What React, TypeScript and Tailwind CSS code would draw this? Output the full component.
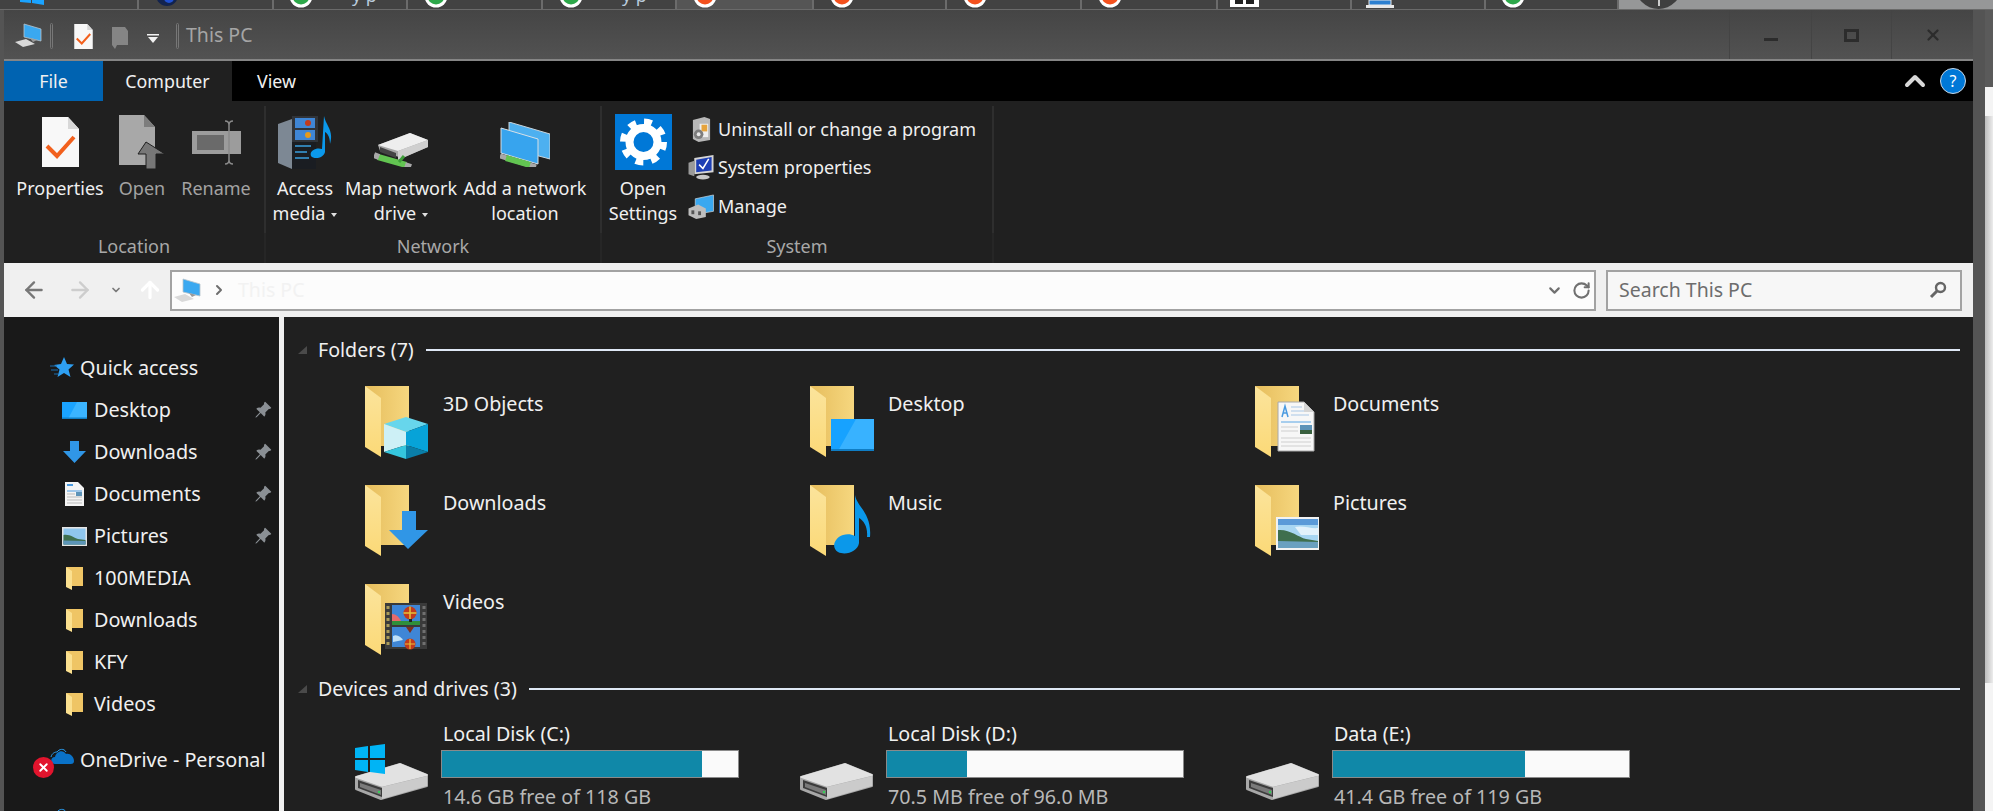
import { ArrowLeft, ArrowRight, ArrowUp, ChevronDown, ChevronRight, ChevronUp, RotateCw, X } from "lucide-react";
import { BsPinAngleFill } from "react-icons/bs";
import type { ReactNode } from "react";

const FONT = "font-['Noto_Sans','Open_Sans',sans-serif]";

function FolderBase({ children }: { children?: ReactNode }) {
  return (
    <svg width="64" height="74" viewBox="0 0 64 74" className="shrink-0">
      <defs>
        <linearGradient id="folderBack" x1="0" y1="0" x2="1" y2="0">
          <stop offset="0" stopColor="#e6bd5c" />
          <stop offset="1" stopColor="#f6d77f" />
        </linearGradient>
        <linearGradient id="folderFlap" x1="0" y1="0" x2="0" y2="1">
          <stop offset="0" stopColor="#fbe49c" />
          <stop offset="1" stopColor="#fbd977" />
        </linearGradient>
      </defs>
      <polygon points="0,0 44,0 44,60 16,60" fill="url(#folderBack)" />
      <polygon points="0,0 16,12 16,71 0,61" fill="url(#folderFlap)" />
      {children}
    </svg>
  );
}

function CubeOverlay() {
  return (
    <g>
      <polygon points="41,31 63,38 41,46 19,38" fill="#67d6ec" />
      <polygon points="19,38 41,46 41,59 19,66" fill="#cdf0f6" />
      <polygon points="63,38 41,46 41,59 63,66" fill="#07a3d8" />
      <polygon points="19,66 41,59 41,73" fill="#35c6de" />
      <polygon points="63,66 41,59 41,73" fill="#0a7ea8" />
    </g>
  );
}

function DownloadOverlay() {
  return <polygon points="37,26 51,26 51,45 63,45 43,64 24,45 37,45" fill="#3096e6" />;
}

function DesktopOverlay() {
  return (
    <g>
      <rect x="21" y="33" width="44" height="32" fill="#17a2ff" />
      <polygon points="46,33 65,33 65,65 28,65" fill="#38b2ff" />
      <rect x="21" y="63" width="44" height="2" fill="#0f7dc4" />
    </g>
  );
}

function DocLines() {
  return (
    <g>
      <polygon points="23,16 49,16 59,26 59,65 23,65" fill="#f7f7f7" stroke="#a8a8a8" />
      <polygon points="49,16 59,26 49,26" fill="#d5d5d5" />
      <path d="M27 31 L30 20 L33 31 M28 27h4" stroke="#4a9ae0" strokeWidth="1.5" fill="none" />
      <path d="M36 21h11M36 25h13M36 29h18" stroke="#a9c7e6" />
      <path d="M26 36h30" stroke="#59a5e4" />
      <path d="M26 41h17M26 45h17M26 52h30M26 56h30M26 60h30" stroke="#cfcfcf" />
      <rect x="45" y="39" width="12" height="9" fill="#5d93b8" />
      <rect x="45" y="44" width="12" height="4" fill="#39603f" />
    </g>
  );
}

function MusicOverlay() {
  return (
    <path
      d="M45 10 C47 22 62 28 60 52 L57 52 C58 42 54 36 49 33 L49 58 C48 66 36 71 28 67 C21 63 24 53 33 50 C37 49 41 49 45 51 Z"
      fill="#0b98ea"
    />
  );
}

function PictureOverlay() {
  return (
    <g>
      <rect x="21" y="32" width="44" height="33" fill="#f2f2f2" />
      <rect x="23" y="34" width="40" height="29" fill="#a8d6f2" />
      <rect x="23" y="34" width="40" height="6" fill="#5b9ad8" />
      <path d="M40 42 C48 40 56 44 63 43 L63 50 L46 50 Z" fill="#e3f2fb" />
      <path d="M23 45 C35 44 43 52 51 54 L63 56 L63 63 L23 63 Z" fill="#3f6f4e" />
      <path d="M23 56 L63 57 L63 63 L23 63 Z" fill="#6aa0c0" />
    </g>
  );
}

function FilmOverlay() {
  return (
    <g>
      <rect x="20" y="19" width="42" height="46" fill="#3a3a3a" />
      <path d="M23 22v40" stroke="#a89a5a" strokeWidth="3" strokeDasharray="3 3" />
      <path d="M59 22v40" stroke="#707070" strokeWidth="3" strokeDasharray="3 3" />
      <rect x="27" y="21" width="28" height="20" fill="#3f86d6" />
      <rect x="27" y="43" width="28" height="20" fill="#3f86d6" />
      <rect x="27" y="37" width="28" height="4" fill="#2f8f3a" />
      <path d="M27 30 C31 30 34 33 36 37 L27 37 Z" fill="#e86a6a" />
      <circle cx="45" cy="29" r="6.5" fill="#c23a1c" />
      <path d="M45 22.5v13M38.5 29h13" stroke="#e5c23a" strokeWidth="1.5" />
      <rect x="44" y="35" width="3" height="3" fill="#222" />
      <path d="M41 43h8l-4 6z" fill="#7d2f1c" />
      <circle cx="45" cy="60" r="5.5" fill="#c23a1c" />
      <path d="M45 55v10M40 60h10" stroke="#e5c23a" strokeWidth="1.2" />
      <path d="M28 52 C32 50 36 53 38 56 L28 58 Z" fill="#bfe0f8" />
    </g>
  );
}

const folders: { name: string; overlay: ReactNode }[] = [
  { name: "3D Objects", overlay: <CubeOverlay /> },
  { name: "Desktop", overlay: <DesktopOverlay /> },
  { name: "Documents", overlay: <DocLines /> },
  { name: "Downloads", overlay: <DownloadOverlay /> },
  { name: "Music", overlay: <MusicOverlay /> },
  { name: "Pictures", overlay: <PictureOverlay /> },
  { name: "Videos", overlay: <FilmOverlay /> },
];

function DriveIcon({ windows }: { windows?: boolean }) {
  return (
    <svg width="74" height="57" viewBox="0 0 74 57" className="shrink-0">
      <polygon points="1,33 45,20 72,31 72,42 26,55 1,45" fill="#a8a8a8" stroke="#a8a8a8" strokeWidth="2" strokeLinejoin="round" />
      <polygon points="1,33 45,20 72,31 27,42" fill="#e2e2e2" stroke="#e2e2e2" strokeWidth="1.5" strokeLinejoin="round" />
      <polygon points="27,43 72,32 72,42 27,55" fill="#cbcbcb" />
      <polygon points="3,36 27,44 27,53 3,44" fill="#3c3c3c" />
      <polygon points="5,39 26,46 26,51 5,43" fill="#7a7a7a" />
      <circle cx="24" cy="48" r="1.2" fill="#35d058" />
      {windows && (
        <g fill="#00b4f5">
          <polygon points="0,4 13,2 13,14 0,14" />
          <polygon points="15,2 30,0 30,14 15,14" />
          <polygon points="0,16 13,16 13,28 0,26" />
          <polygon points="15,16 30,16 30,30 15,28" />
        </g>
      )}
    </svg>
  );
}

const drives = [
  { name: "Local Disk (C:)", free: "14.6 GB free of 118 GB", used: 88, windows: true },
  { name: "Local Disk (D:)", free: "70.5 MB free of 96.0 MB", used: 27, windows: false },
  { name: "Data (E:)", free: "41.4 GB free of 119 GB", used: 65, windows: false },
];

function PcIcon({ className }: { className?: string }) {
  return (
    <svg viewBox="0 0 27 24" className={className}>
      <polygon points="9,1 26,6 26,18 9,14" fill="#3aa8f0" stroke="#b8c4cc" strokeWidth="0.8" />
      <polygon points="15,15 22,17 18,19" fill="#9a9a9a" />
      <polygon points="0,19 11,16 20,21 8,24" fill="#d9d9d9" />
    </svg>
  );
}

function PropertiesIcon({ className }: { className?: string }) {
  return (
    <svg viewBox="0 0 37 50" className={className}>
      <polygon points="0,0 26,0 37,12 37,50 0,50" fill="#f8f8f8" />
      <polygon points="26,0 37,12 26,12" fill="#d8d8d8" />
      <path d="M5 29 L15 39 L32 20" stroke="#f2601d" strokeWidth="4" fill="none" />
    </svg>
  );
}

function OpenIcon({ className }: { className?: string }) {
  return (
    <svg viewBox="0 0 46 54" className={className}>
      <polygon points="0,0 25,0 36,12 36,50 0,50" fill="#a8a8a8" />
      <polygon points="25,0 36,12 25,12" fill="#7d7d7d" />
      <polygon points="27,27 46,39 37,39 37,54 27,54 27,39 19,39" fill="#777777" stroke="#1f1f1f" />
    </svg>
  );
}

function RenameIcon({ className }: { className?: string }) {
  return (
    <svg viewBox="0 0 49 45" className={className}>
      <rect x="0" y="11" width="49" height="23" fill="#9c9c9c" />
      <rect x="5" y="15" width="27" height="15" fill="#6a6a6a" />
      <path d="M33 1 C36 1 37 3 37 5 L37 40 C37 42 38 44 41 44 M41 1 C38 1 37 3 37 5 M37 40 C37 42 36 44 33 44" stroke="#8a8a8a" strokeWidth="1.5" fill="none" />
    </svg>
  );
}

function MediaIcon({ className }: { className?: string }) {
  return (
    <svg viewBox="0 0 55 53" className={className}>
      <polygon points="0,8 14,3 38,6 38,53 14,53 0,47" fill="#7d8894" />
      <polygon points="14,9 38,10 38,53 14,53" fill="#1a1d22" />
      <path d="M17 30h16M17 36h12M17 42h14" stroke="#3aa0e0" strokeWidth="1.5" />
      <rect x="14" y="0" width="26" height="26" fill="#30343a" />
      <rect x="17" y="2" width="20" height="10" fill="#3f86d6" />
      <rect x="17" y="14" width="20" height="10" fill="#3f86d6" />
      <circle cx="30" cy="7" r="3" fill="#c23a1c" />
      <circle cx="30" cy="19" r="3" fill="#e59a1c" />
      <path d="M46 0 C48 10 56 14 52 28 C52 20 49 17 47 16 L47 36 C46 42 36 44 33 40 C31 35 38 31 44 33 Z" fill="#0b98ea" />
    </svg>
  );
}

function MapDriveIcon({ className }: { className?: string }) {
  return (
    <svg viewBox="0 0 54 34" className={className}>
      <polygon points="4,12 36,0 54,7 54,14 28,25 6,18" fill="#a8a8a8" />
      <polygon points="4,12 36,0 54,7 24,18" fill="#eeeeee" />
      <polygon points="24,18 54,7 54,14 24,27" fill="#cfcfcf" />
      <polygon points="6,14 22,20 22,25 6,19" fill="#444" />
      <path d="M4 24 L32 32" stroke="#62c451" strokeWidth="6" />
      <path d="M0 22 L5 24M31 32 L37 34" stroke="#a8a8a8" strokeWidth="6" />
      <path d="M30 23 L25 29" stroke="#3f9e3a" strokeWidth="3" />
    </svg>
  );
}

function NetLocationIcon({ className }: { className?: string }) {
  return (
    <svg viewBox="0 0 50 45" className={className}>
      <polygon points="9,0 50,12 50,37 9,26" fill="#4db0f0" stroke="#c8d4dc" />
      <polygon points="1,6 38,17 38,42 1,31" fill="#37a4ee" stroke="#d8e0e6" />
      <path d="M0 34 L36 45" stroke="#a8a8a8" strokeWidth="5" />
      <path d="M6 36 L30 43" stroke="#62c451" strokeWidth="6" />
    </svg>
  );
}

function GearIcon() {
  return (
    <svg viewBox="0 0 57 56" className="w-[57px] h-[56px] bg-[#0078d7]">
      <circle cx="28.5" cy="28" r="14" stroke="#ffffff" strokeWidth="8" fill="none" />
      <circle cx="28.5" cy="28" r="20" stroke="#ffffff" strokeWidth="7" fill="none" strokeDasharray="7.7 8" />
    </svg>
  );
}

function UninstallIcon() {
  return (
    <svg viewBox="0 0 22 26" className="w-[21px] h-[25px]">
      <polygon points="2,3 14,0 20,2 20,24 8,26 2,23" fill="#b8b8b8" />
      <rect x="9" y="7" width="9" height="14" fill="#efefef" />
      <rect x="11" y="8" width="6" height="7" fill="#e6a33c" />
      <circle cx="8" cy="18" r="5" fill="#7d7d7d" />
      <circle cx="8" cy="18" r="2" fill="#e8e8e8" />
    </svg>
  );
}

function SystemIcon() {
  return (
    <svg viewBox="0 0 27 26" className="w-[27px] h-[25px]">
      <polygon points="6,3 26,0 26,18 6,20" fill="#d5d5d5" />
      <polygon points="8,5 24,2 24,16 8,18" fill="#1d3fb5" />
      <path d="M11 10 L15 14 L21 4" stroke="#ffffff" strokeWidth="1.6" fill="none" />
      <polygon points="0,8 6,6 6,22 0,20" fill="#9a9a9a" />
      <ellipse cx="15" cy="23" rx="7" ry="2.5" fill="#c8c8c8" />
    </svg>
  );
}

function ManageIcon() {
  return (
    <svg viewBox="0 0 27 26" className="w-[27px] h-[25px]">
      <polygon points="7,5 26,1 26,18 14,20 7,12" fill="#3aa8f0" stroke="#cfd8de" strokeWidth="0.7" />
      <polygon points="0,15 10,11 18,15 18,24 8,26 0,22" fill="#bdbdbd" />
      <rect x="3" y="17" width="3" height="4" fill="#555" />
      <rect x="10" y="18" width="3" height="4" fill="#555" />
    </svg>
  );
}

function StarIcon() {
  return (
    <svg viewBox="0 0 24 22" className="w-[24px] h-[22px] shrink-0">
      <polygon points="14,0 17,7 24,7.5 18.5,12.5 20.5,20 14,16 7.5,20 9.5,12.5 4,8 11,7" fill="#2e9ff2" />
      <path d="M0 9h7M1 13h7M4 17h4" stroke="#1a6fb0" strokeWidth="1" />
    </svg>
  );
}

function NavDesktop() {
  return (
    <svg viewBox="0 0 25 17" className="w-[25px] h-[17px]">
      <rect width="25" height="17" fill="#1aa3ff" />
      <polygon points="15,0 25,0 25,17 6,17" fill="#3bb4ff" />
      <rect y="15.5" width="25" height="1.5" fill="#0f7dc4" />
    </svg>
  );
}

function NavDownload() {
  return (
    <svg viewBox="0 0 23 23" className="w-[23px] h-[23px]">
      <polygon points="7,0 16,0 16,10 23,10 11.5,22 0,10 7,10" fill="#3096e6" />
    </svg>
  );
}

function NavDocument() {
  return (
    <svg viewBox="0 0 19 24" className="w-[19px] h-[24px]">
      <polygon points="0,0 13,0 19,6 19,24 0,24" fill="#f4f4f4" />
      <path d="M2 9h15" stroke="#4a9ae0" />
      <path d="M2 3h6" stroke="#4a9ae0" strokeWidth="2" />
      <path d="M2 12h8M2 15h15M2 18h15M2 21h15" stroke="#bbbbbb" />
      <rect x="11" y="10" width="6" height="4" fill="#5d93b8" />
    </svg>
  );
}

function NavPicture() {
  return (
    <svg viewBox="0 0 25 19" className="w-[25px] h-[19px]">
      <rect width="25" height="19" fill="#e4e4e4" />
      <rect x="1.5" y="1.5" width="22" height="16" fill="#8fc6ee" />
      <path d="M1.5 8 C8 7 12 11 16 12 L23.5 13 L23.5 17.5 L1.5 17.5 Z" fill="#3f6f4e" />
      <path d="M1.5 13.5 L23.5 14 L23.5 17.5 L1.5 17.5 Z" fill="#5c95b8" />
    </svg>
  );
}

function NavFolder() {
  return (
    <svg viewBox="0 0 17 23" className="w-[17px] h-[23px]">
      <polygon points="0,0 17,0 17,19 6,19" fill="#efc565" />
      <polygon points="0,0 6,4 6,23 0,20" fill="#fbe08f" />
    </svg>
  );
}

function OneDriveIcon({ className }: { className?: string }) {
  return (
    <svg viewBox="0 0 24 17" className={className}>
      <path d="M5 16 C0 16 0 9 5 9 C6 3 13 1 16 6 C20 5 24 9 24 13 C24 15 23 16 21 16 Z" fill="#0a72c8" />
      <path d="M1 9 C2 5 5 4 7 4 C9 1 14 0 16 4" stroke="#2a9df0" strokeWidth="1" fill="none" />
    </svg>
  );
}

const quickAccess: { name: string; icon: ReactNode; pinned?: boolean }[] = [
  { name: "Desktop", icon: <NavDesktop />, pinned: true },
  { name: "Downloads", icon: <NavDownload />, pinned: true },
  { name: "Documents", icon: <NavDocument />, pinned: true },
  { name: "Pictures", icon: <NavPicture />, pinned: true },
  { name: "100MEDIA", icon: <NavFolder /> },
  { name: "Downloads", icon: <NavFolder /> },
  { name: "KFY", icon: <NavFolder /> },
  { name: "Videos", icon: <NavFolder /> },
];

function Ring({ color, className }: { color: string; className: string }) {
  return (
    <svg width="26" height="8" viewBox="0 0 26 8" className={className}>
      <circle cx="13" cy="-4" r="11.5" fill="#ffffff" />
      <circle cx="13" cy="-4" r="8.5" fill={color} />
    </svg>
  );
}

const GREEN = "#2da84a";
const ORANGE = "#f4511e";

const browserTabs: { w: string; active?: boolean; content?: ReactNode }[] = [
  {
    w: "w-[139px]",
    content: (
      <svg width="24" height="5" viewBox="0 0 24 5" className="ml-[20px]">
        <polygon points="0,0 11,0 11,3 0,2" fill="#1aa3ff" />
        <polygon points="12,0 24,0 24,5 12,3" fill="#1aa3ff" />
      </svg>
    ),
  },
  {
    w: "w-[135px]",
    content: (
      <svg width="24" height="6" viewBox="0 0 24 6" className="ml-[16px]">
        <circle cx="12" cy="-5" r="11" fill="#12234f" />
        <circle cx="14" cy="-2" r="5" fill="#1f4fd0" />
      </svg>
    ),
  },
  {
    w: "w-[134px]",
    content: (
      <>
        <Ring color={GREEN} className="ml-[14px]" />
        <span className="ml-[38px] -mt-[17px] text-[18px] leading-[24px] text-[#b9cbdc]">y p</span>
      </>
    ),
  },
  { w: "w-[135px]", content: <Ring color={GREEN} className="ml-[15px]" /> },
  {
    w: "w-[134px]",
    content: (
      <>
        <Ring color={GREEN} className="ml-[15px]" />
        <span className="ml-[38px] -mt-[17px] text-[18px] leading-[24px] text-[#b9cbdc]">y p</span>
      </>
    ),
  },
  { w: "w-[137px]", active: true, content: <Ring color={ORANGE} className="ml-[15px]" /> },
  { w: "w-[133px]", content: <Ring color={ORANGE} className="ml-[15px]" /> },
  { w: "w-[135px]", content: <Ring color={ORANGE} className="ml-[15px]" /> },
  { w: "w-[136px]", content: <Ring color={ORANGE} className="ml-[15px]" /> },
  {
    w: "w-[134px]",
    content: (
      <div className="ml-[12px] w-[29px] h-[7px] bg-white flex items-start justify-center gap-[3px]">
        <div className="w-[8px] h-[4px] bg-[#222]" />
        <div className="w-[8px] h-[4px] bg-[#222]" />
      </div>
    ),
  },
  {
    w: "w-[134px]",
    content: (
      <svg width="28" height="8" viewBox="0 0 28 8" className="ml-[14px]">
        <rect x="3" width="22" height="5" fill="#2b7fd0" stroke="#e8e8e8" />
        <rect y="5" width="28" height="3" fill="#e8e8e8" />
      </svg>
    ),
  },
  { w: "w-[133px]", content: <Ring color={GREEN} className="ml-[14px]" /> },
];

function TabStrip() {
  return (
    <div className="h-[9px] flex bg-[#969798] overflow-hidden">
      <div className="w-[3px] bg-[#424242] border-r border-[#6a6a6a]" />
      {browserTabs.map((tab, i) => (
        <div
          key={i}
          className={`${tab.w} ${i === 0 ? "-ml-[3px]" : ""} h-[9px] flex items-start overflow-hidden border-r-2 border-[#6b6b6b] ${tab.active ? "bg-[#555555]" : "bg-[#424242]"}`}
        >
          {tab.content}
        </div>
      ))}
      <div className="ml-[16px] w-[47px] h-[9px] overflow-hidden flex justify-center">
        <div className="w-[47px] h-[47px] shrink-0 -mt-[38px] rounded-full bg-[#3f3f3f] flex justify-center items-end">
          <div className="w-[2px] h-[6px] bg-[#cccccc] mb-[3px]" />
        </div>
      </div>
    </div>
  );
}

function TitleBar() {
  return (
    <div className="h-[51px] flex bg-gradient-to-b from-[#454545] to-[#525252] border-b-2 border-[#858585]">
      <PcIcon className="ml-[11px] mt-[13px] w-[27px] h-[24px] shrink-0" />
      <div className="ml-[8px] mt-[13px] w-[3px] h-[26px] border border-[#777] rounded-sm" />
      <PropertiesIcon className="ml-[21px] mt-[14px] w-[19px] h-[25px] shrink-0" />
      <svg viewBox="0 0 16 22" className="ml-[19px] mt-[17px] w-[16px] h-[22px] shrink-0">
        <polygon points="0,0 13,0 16,4 16,18 5,18 3,22 0,18" fill="#858585" />
      </svg>
      <svg viewBox="0 0 12 9" className="ml-[19px] mt-[24px] w-[12px] h-[9px] shrink-0">
        <rect width="12" height="1.5" fill="#f2f2f2" />
        <polygon points="1,3 11,3 6,9" fill="#f2f2f2" />
      </svg>
      <div className="ml-[17px] mt-[13px] w-[3px] h-[26px] border border-[#777] rounded-sm" />
      <span className="ml-[7px] mt-[11px] text-[19.5px] leading-[28px] text-[#a5a5a5]">This PC</span>
      <div className="ml-auto flex">
        <div className="w-[82px] border-l border-[#444] flex justify-center">
          <div className="mt-[28px] w-[14px] h-[3px] bg-[#2c2c2c]" />
        </div>
        <div className="w-[80px] border-l border-[#444] flex justify-center">
          <div className="mt-[19px] w-[15px] h-[13px] border-[3px] border-[#2c2c2c]" />
        </div>
        <div className="w-[82px] border-l border-[#444] flex justify-center">
          <X size={18} strokeWidth={3} color="#2c2c2c" className="mt-[16px]" />
        </div>
      </div>
    </div>
  );
}

function RibbonTabs() {
  return (
    <div className="h-[40px] flex items-center bg-black text-[#f0f0f0] text-[17.8px]">
      <div className="w-[99px] h-full bg-[#0063b1] flex items-center justify-center">File</div>
      <div className="w-[129px] h-full bg-[#202020] flex items-center justify-center">Computer</div>
      <span className="ml-[25px]">View</span>
      <ChevronUp size={32} strokeWidth={3} color="#d8d8d8" className="ml-auto" />
      <div className="ml-[9px] mr-[7px] w-[26px] h-[26px] rounded-full bg-[#0078d7] border border-[#c8d8e8] flex items-center justify-center text-white text-[16px]">?</div>
    </div>
  );
}

function LargeButton({ width, icon, lines, dim }: { width: string; icon: ReactNode; lines: ReactNode[]; dim?: boolean }) {
  return (
    <div className={`${width} flex flex-col items-center shrink-0`}>
      <div className="h-[75px] pt-[7px] flex items-center justify-center">{icon}</div>
      {lines.map((line, i) => (
        <div key={i} className={`h-[25px] leading-[25px] whitespace-nowrap ${dim ? "text-[#a3a3a3]" : "text-[#f0f0f0]"}`}>
          {line}
        </div>
      ))}
    </div>
  );
}

function Caret() {
  return <span className="inline-block ml-[6px] mb-[3px] border-x-[3px] border-x-transparent border-t-[4px] border-t-[#e0e0e0]" />;
}

function RibbonGroup({ width, label, children }: { width: string; label: string; children: ReactNode }) {
  return (
    <div className={`${width} flex flex-col shrink-0`}>
      <div className="h-[131px] pr-0 flex border-r-2 border-[#2e2e2e] mt-[5px] -mb-[5px]">
        <div className="-mt-[5px] flex">{children}</div>
      </div>
      <div className="mt-[5px] h-[31px] pb-[2px] flex items-center justify-center text-[18px] text-[#a8a8a8] border-r-2 border-[#262626]">{label}</div>
    </div>
  );
}

function Ribbon() {
  return (
    <div className="h-[162px] flex bg-[#202020] text-[18px] overflow-hidden">
      <RibbonGroup width="w-[262px]" label="Location">
        <LargeButton width="w-[112px]" icon={<PropertiesIcon className="w-[37px] h-[50px]" />} lines={["Properties"]} />
        <LargeButton width="w-[52px]" icon={<OpenIcon className="w-[46px] h-[54px]" />} lines={["Open"]} dim />
        <LargeButton width="w-[96px]" icon={<RenameIcon className="w-[49px] h-[45px]" />} lines={["Rename"]} dim />
      </RibbonGroup>
      <RibbonGroup width="w-[336px]" label="Network">
        <LargeButton width="w-[78px]" icon={<MediaIcon className="w-[55px] h-[53px]" />} lines={["Access", <>media<Caret /></>]} />
        <LargeButton width="w-[114px]" icon={<MapDriveIcon className="w-[54px] h-[34px] mt-[16px]" />} lines={["Map network", <>drive<Caret /></>]} />
        <LargeButton width="w-[134px]" icon={<NetLocationIcon className="w-[50px] h-[45px] mt-[5px]" />} lines={["Add a network", "location"]} />
      </RibbonGroup>
      <RibbonGroup width="w-[392px]" label="System">
        <LargeButton width="w-[82px]" icon={<GearIcon />} lines={["Open", "Settings"]} />
        <div className="pt-[9px] flex flex-col text-[#f0f0f0]">
          {[
            { label: "Uninstall or change a program", icon: <UninstallIcon /> },
            { label: "System properties", icon: <SystemIcon /> },
            { label: "Manage", icon: <ManageIcon /> },
          ].map((item) => (
            <div key={item.label} className="h-[38.5px] flex items-center whitespace-nowrap">
              <div className="w-[34px] flex justify-center">{item.icon}</div>
              <span>{item.label}</span>
            </div>
          ))}
        </div>
      </RibbonGroup>
    </div>
  );
}

function NavBar() {
  return (
    <div className="h-[54px] flex items-center bg-[#f0f0f0]">
      <ArrowLeft size={26} strokeWidth={2.2} color="#777777" className="ml-[17px] shrink-0" />
      <ArrowRight size={26} strokeWidth={2.2} color="#cdcdcd" className="ml-[20px] shrink-0" />
      <ChevronDown size={12} strokeWidth={3.5} color="#7a7a7a" className="ml-[17px] shrink-0" />
      <ArrowUp size={26} strokeWidth={3} color="#ffffff" className="ml-[15px] shrink-0" />
      <div className="ml-[7px] w-[1426px] h-[41px] flex items-center bg-[#fcfcfc] border-2 border-[#a2a2a2]">
        <PcIcon className="ml-[2px] w-[27px] h-[24px] shrink-0" />
        <ChevronRight size={16} strokeWidth={3} color="#6e6e6e" className="ml-[10px] shrink-0" />
        <span className="ml-[11px] text-[19.5px] text-[#f2f2f2]">This PC</span>
        <ChevronDown size={17} strokeWidth={3} color="#707070" className="ml-auto" />
        <RotateCw size={19} strokeWidth={2.6} color="#707070" className="ml-[9px] mr-[3px]" />
      </div>
      <div className="ml-[10px] w-[356px] h-[41px] flex items-center bg-[#f7f7f7] border-2 border-[#a2a2a2] text-[#6d6d6d]">
        <span className="ml-[11px] text-[19.5px]">Search This PC</span>
        <svg viewBox="0 0 18 18" className="ml-auto mr-[13px] w-[18px] h-[18px]">
          <circle cx="11.5" cy="6.5" r="4.5" stroke="#666" strokeWidth="2.4" fill="none" />
          <path d="M8 10 L2 16" stroke="#666" strokeWidth="3" />
        </svg>
      </div>
    </div>
  );
}

function Sidebar() {
  return (
    <div className="w-[275px] shrink-0 pt-[30px] bg-[#191919] text-[#f0f0f0] text-[19.8px] overflow-hidden">
      <div className="h-[42px] pl-[46px] flex items-center">
        <StarIcon />
        <span className="ml-[6px]">Quick access</span>
      </div>
      {quickAccess.map((item, i) => (
        <div key={i} className="h-[42px] flex items-center">
          <div className="ml-[58px] w-[25px] flex justify-center shrink-0">{item.icon}</div>
          <span className="ml-[7px]">{item.name}</span>
          {item.pinned && <BsPinAngleFill size={18} color="#8a8f94" className="ml-auto mr-[7px]" />}
        </div>
      ))}
      <div className="mt-[14px] h-[42px] flex items-center">
        <div className="ml-[29px] relative flex items-center">
          <OneDriveIcon className="ml-[17px] w-[24px] h-[17px] -mt-[8px]" />
          <div className="absolute left-0 top-[1px] w-[21px] h-[21px] rounded-full bg-[#e2142d] flex items-center justify-center">
            <X size={13} strokeWidth={3.5} color="#ffffff" />
          </div>
        </div>
        <span className="ml-[6px]">OneDrive - Personal</span>
      </div>
      <div className="mt-[18px] h-[42px] flex items-center">
        <OneDriveIcon className="ml-[46px] w-[24px] h-[17px] -mt-[8px]" />
        <span className="ml-[6px] whitespace-nowrap">OneDrive - University</span>
      </div>
    </div>
  );
}

function SectionHeader({ label }: { label: string }) {
  return (
    <div className="h-[24px] pl-[14px] pr-[13px] flex items-center text-[19.6px] text-[#f0f0f0]">
      <div className="w-0 h-0 border-l-[9px] border-l-transparent border-b-[8px] border-b-[#4a4a4a] shrink-0" />
      <span className="ml-[11px] whitespace-nowrap">{label}</span>
      <div className="ml-[12px] flex-1 h-[2px] bg-[#dfe8f5]" />
    </div>
  );
}

function Content() {
  return (
    <div className="flex-1 pt-[21px] bg-[#202020] overflow-hidden text-[19.7px] text-[#f0f0f0]">
      <SectionHeader label="Folders (7)" />
      <div className="mt-[24px] pl-[81px] grid grid-cols-[445px_445px_445px] gap-y-[28px]">
        {folders.map((folder) => (
          <div key={folder.name} className="h-[71px] flex">
            <div className="w-[78px]">
              <FolderBase>{folder.overlay}</FolderBase>
            </div>
            <span className="leading-[36px]">{folder.name}</span>
          </div>
        ))}
      </div>
      <div className="mt-[22px]">
        <SectionHeader label="Devices and drives (3)" />
      </div>
      <div className="mt-[21px] pl-[71px] grid grid-cols-[445px_446px_445px]">
        {drives.map((drive) => (
          <div key={drive.name} className="flex">
            <div className="w-[86px] pt-[22px]">
              <DriveIcon windows={drive.windows} />
            </div>
            <div className="w-[298px]">
              <div className="ml-[2px] h-[24px] leading-[24px]">{drive.name}</div>
              <div className="mt-[4px] h-[28px] bg-[#fafafa] border border-[#8a8a8a]">
                <div className="h-full bg-[#1088a8]" style={{ width: `${drive.used}%` }} />
              </div>
              <div className="ml-[2px] mt-[7px] h-[24px] leading-[24px] text-[#b8b8b8]">{drive.free}</div>
            </div>
          </div>
        ))}
      </div>
    </div>
  );
}

export default function App() {
  return (
    <div className={`${FONT} w-[1993px] h-[811px] overflow-hidden flex flex-col bg-[#969798]`}>
      <TabStrip />
      <div className="flex-1 flex min-h-0 border-t border-[#6a6a6a]">
        <div className="w-[1985px] shrink-0 flex flex-col border-l-4 border-r-[12px] border-[#545454]">
          <TitleBar />
          <RibbonTabs />
          <Ribbon />
          <NavBar />
          <div className="flex-1 flex min-h-0">
            <Sidebar />
            <div className="w-[5px] shrink-0 bg-[#f0f0f0]" />
            <Content />
          </div>
        </div>
        <div className="flex-1 flex flex-col">
          <div className="h-[77px] bg-[#5a5a5a]" />
          <div className="h-[29px] bg-[#f4f4f4]" />
          <div className="flex-1 bg-gradient-to-r from-[#bdbdbd] to-[#ececec]" />
          <div className="h-[128px] bg-[#f4f4f4]" />
        </div>
      </div>
    </div>
  );
}
